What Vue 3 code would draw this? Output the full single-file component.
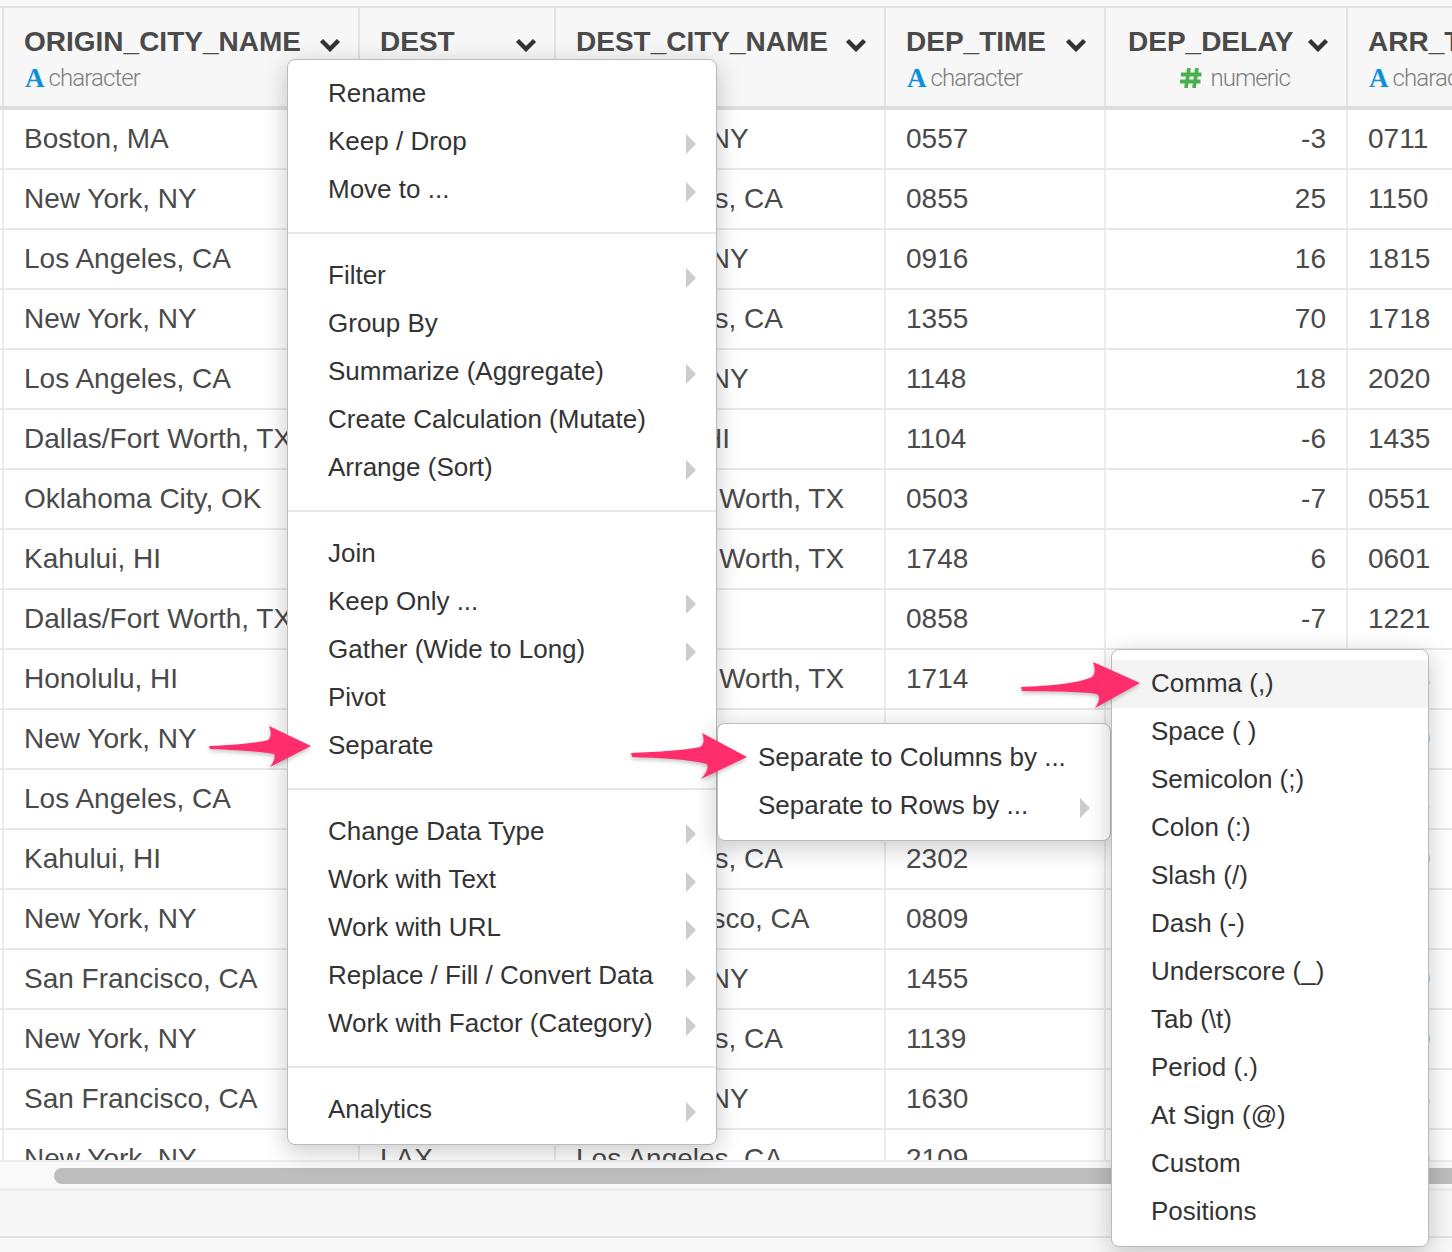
<script setup>
const columns = [
  { name: 'ORIGIN_CITY_NAME', cls: 'c-origin', type: 'character' },
  { name: 'DEST', cls: 'c-dest', type: 'character' },
  { name: 'DEST_CITY_NAME', cls: 'c-city', type: 'character' },
  { name: 'DEP_TIME', cls: 'c-time', type: 'character' },
  { name: 'DEP_DELAY', cls: 'c-delay', type: 'numeric' },
  { name: 'ARR_TIME', cls: 'c-arr', type: 'character' }
];

const rows = [
  ['Boston, MA', 'JFK', 'New York, NY', '0557', '-3', '0711'],
  ['New York, NY', 'LAX', 'Los Angeles, CA', '0855', '25', '1150'],
  ['Los Angeles, CA', 'JFK', 'New York, NY', '0916', '16', '1815'],
  ['New York, NY', 'LAX', 'Los Angeles, CA', '1355', '70', '1718'],
  ['Los Angeles, CA', 'JFK', 'New York, NY', '1148', '18', '2020'],
  ['Dallas/Fort Worth, TX', 'HNL', 'Honolulu, HI', '1104', '-6', '1435'],
  ['Oklahoma City, OK', 'DFW', 'Dallas/Fort Worth, TX', '0503', '-7', '0551'],
  ['Kahului, HI', 'DFW', 'Dallas/Fort Worth, TX', '1748', '6', '0601'],
  ['Dallas/Fort Worth, TX', 'OGG', 'Kahului, HI', '0858', '-7', '1221'],
  ['Honolulu, HI', 'DFW', 'Dallas/Fort Worth, TX', '1714', '4', '0458'],
  ['New York, NY', 'LAX', 'Los Angeles, CA', '1200', '12', '1530'],
  ['Los Angeles, CA', 'JFK', 'New York, NY', '0735', '-2', '1602'],
  ['Kahului, HI', 'LAX', 'Los Angeles, CA', '2302', '2', '0640'],
  ['New York, NY', 'SFO', 'San Francisco, CA', '0809', '9', '1120'],
  ['San Francisco, CA', 'JFK', 'New York, NY', '1455', '-5', '2310'],
  ['New York, NY', 'LAX', 'Los Angeles, CA', '1139', '19', '1440'],
  ['San Francisco, CA', 'JFK', 'New York, NY', '1630', '30', '0055'],
  ['New York, NY', 'LAX', 'Los Angeles, CA', '2109', '14', '2359']
];

// groups of the column menu, a divider goes between each
const mainMenu = [
  [
    { label: 'Rename' },
    { label: 'Keep / Drop', sub: true },
    { label: 'Move to ...', sub: true }
  ],
  [
    { label: 'Filter', sub: true },
    { label: 'Group By' },
    { label: 'Summarize (Aggregate)', sub: true },
    { label: 'Create Calculation (Mutate)' },
    { label: 'Arrange (Sort)', sub: true }
  ],
  [
    { label: 'Join' },
    { label: 'Keep Only ...', sub: true },
    { label: 'Gather (Wide to Long)', sub: true },
    { label: 'Pivot' },
    { label: 'Separate' }
  ],
  [
    { label: 'Change Data Type', sub: true },
    { label: 'Work with Text', sub: true },
    { label: 'Work with URL', sub: true },
    { label: 'Replace / Fill / Convert Data', sub: true },
    { label: 'Work with Factor (Category)', sub: true }
  ],
  [{ label: 'Analytics', sub: true }]
];

const separators = [
  'Comma (,)', 'Space ( )', 'Semicolon (;)', 'Colon (:)', 'Slash (/)', 'Dash (-)',
  'Underscore (_)', 'Tab (\\t)', 'Period (.)', 'At Sign (@)', 'Custom', 'Positions'
];
</script>

<template>
  <div class="page">
    <div class="table-wrap">
      <div class="row head">
        <div v-for="col in columns" :key="col.name" class="cell" :class="col.cls">
          <div class="head-top">
            <span class="head-name">{{ col.name }}</span>
            <svg class="chevron" width="22" height="14" viewBox="0 0 22 14">
              <path d="M2.5 2.5 L11 11 L19.5 2.5" fill="none" stroke="#333" stroke-width="4.4" />
            </svg>
          </div>
          <div class="head-type" :class="{ numeric: col.type === 'numeric' }">
            <svg v-if="col.type === 'numeric'" class="type-hash" width="22" height="20" viewBox="0 0 22 20">
              <path d="M9 0 L6 20 M17 0 L14 20 M1 6.5 H21.5 M0 13.5 H20.5" fill="none" stroke="#4caf50" stroke-width="3.8" />
            </svg>
            <span v-else class="type-a">A</span>
            <span class="type-name">{{ col.type }}</span>
          </div>
        </div>
      </div>
      <div v-for="(row, i) in rows" :key="i" class="row body-row">
        <div
          v-for="(val, j) in row"
          :key="j"
          class="cell"
          :class="[columns[j].cls, { right: columns[j].type === 'numeric' }]"
        >{{ val }}</div>
      </div>
    </div>

    <div class="scroll-track"><div class="scroll-thumb"></div></div>
    <div class="footer"></div>
    <div class="footer-end"></div>

    <!-- column menu -->
    <div class="menu menu-main">
      <template v-for="(group, g) in mainMenu" :key="g">
        <div v-if="g > 0" class="divider"></div>
        <div v-for="item in group" :key="item.label" class="item">
          <span>{{ item.label }}</span>
          <i v-if="item.sub" class="caret"></i>
        </div>
      </template>
    </div>

    <div class="menu menu-sub">
      <div class="item">Separate to Columns by ...</div>
      <div class="item">
        <span>Separate to Rows by ...</span>
        <i class="caret"></i>
      </div>
    </div>

    <div class="menu menu-sep">
      <div v-for="(label, i) in separators" :key="label" class="item" :class="{ active: i === 0 }">{{ label }}</div>
    </div>

    <svg class="arrow arrow-1" width="106" height="44" viewBox="0 0 106 44">
      <path d="M1 21 C 25 20 50 18 60 15 C 64 12 63 6 61 1 L 103 21 L 62 42 C 66 36 68 32 66 29 C 50 26 25 25 2 24 Z" />
    </svg>
    <svg class="arrow arrow-2" width="120" height="48" viewBox="0 0 120 48">
      <path d="M1 21 C 28 20 58 18 70 15 C 75 12 74 6 72 1 L 117 25 L 71 47 C 76 41 79 36 77 32 C 58 27 28 26 2 25 Z" />
    </svg>
    <svg class="arrow arrow-3" width="122" height="48" viewBox="0 0 122 48">
      <path d="M1 26 C 30 25 60 22 72 16 C 76 12 75 6 73 1 L 120 22 L 75 47 C 79 41 81 36 77 33 C 60 30 26 31 2 30 Z" />
    </svg>
  </div>
</template>

<style scoped>
.page {
  position: relative;
  width: 1452px;
  height: 1252px;
  overflow: hidden;
  padding-top: 6px;
  box-sizing: border-box;
  background: #f8f8f8;
  font-family: "Liberation Sans", Arial, sans-serif;
  font-size: 28px;
  color: #4a4a4a;
}

.table-wrap {
  height: 1154px;
  overflow: hidden;
  background: #fff;
  border-top: 2px solid #e2e2e2;
  box-sizing: border-box;
}

.row {
  display: flex;
  padding-left: 2px;
}

.cell {
  flex: none;
  box-sizing: border-box;
  padding: 0 20px;
  border-left: 2px solid #ececec;
  white-space: nowrap;
  overflow: hidden;
}

.c-origin { width: 356px; }
.c-dest { width: 196px; }
.c-city { width: 330px; }
.c-time { width: 220px; }
.c-delay { width: 242px; }
.c-arr { width: 200px; }

.head {
  height: 102px;
  background: #f7f7f7;
  border-bottom: 4px solid #dedede;
  box-sizing: border-box;
}

.head .cell {
  border-left-color: #e2e2e2;
  padding-top: 18px;
  padding-right: 17px;
}

.head .c-delay {
  padding-left: 22px;
}

.head-top {
  display: flex;
  justify-content: space-between;
  align-items: center;
  height: 32px;
  font-weight: 700;
}

.chevron {
  margin-top: 6px;
  flex: none;
}

.head-type {
  display: flex;
  align-items: center;
  height: 28px;
  margin-top: 6px;
  font-size: 24px;
}

.head-type.numeric {
  justify-content: flex-end;
  padding-right: 39px;
}

.type-a {
  font-family: "Liberation Serif", serif;
  font-weight: 700;
  font-size: 27px;
  color: #0d8fdc;
  margin-left: 1px;
  margin-right: 4px;
}

.type-hash {
  flex: none;
  margin-right: 8px;
}

.type-name {
  font-family: Roboto, sans-serif;
  font-weight: 300;
  color: #7d7d7d;
  letter-spacing: -0.9px;
}

.body-row {
  height: 60px;
  border-bottom: 2px solid #e8e8e8;
  box-sizing: border-box;
}

.body-row .cell {
  line-height: 57px;
}

.right {
  text-align: right;
}

.scroll-track {
  height: 28px;
  padding-top: 6px;
  box-sizing: border-box;
  background: #f9f9f9;
  border-top: 2px solid #ededed;
}

.scroll-thumb {
  height: 16px;
  margin-left: 54px;
  border-radius: 8px 0 0 8px;
  background: #bdbdbd;
}

.footer {
  height: 50px;
  box-sizing: border-box;
  background: #f7f7f7;
  border-top: 3px solid #eeeeee;
  border-bottom: 2px solid #e2e2e2;
}

.footer-end {
  height: 14px;
}

.menu {
  position: absolute;
  box-sizing: border-box;
  background: #fff;
  border: 1px solid #bcbcbc;
  border-radius: 8px;
  box-shadow: 0 6px 24px rgba(0, 0, 0, 0.22);
  color: #333;
  font-size: 26px;
  overflow: hidden;
}

.menu-main {
  left: 287px;
  top: 59px;
  width: 430px;
  height: 1086px;
  padding-top: 9px;
}

.menu-sub {
  left: 717px;
  top: 723px;
  width: 394px;
  height: 118px;
  padding-top: 9px;
}

.menu-sep {
  left: 1111px;
  top: 649px;
  width: 318px;
  height: 598px;
  padding-top: 10px;
}

.item {
  position: relative;
  height: 48px;
  line-height: 48px;
  padding-left: 40px;
  white-space: nowrap;
}

.menu-sep .item {
  line-height: 47px;
  padding-left: 39px;
}

.active {
  background: #f4f4f4;
}

.caret {
  position: absolute;
  right: 20px;
  top: 17px;
  border-style: solid;
  border-width: 10px 0 10px 10px;
  border-color: transparent transparent transparent #cccccc;
}

.divider {
  height: 2px;
  margin: 19px 0 17px;
  background: #e8e8e8;
}

.arrow {
  position: absolute;
  fill: #ff2d6c;
  filter: drop-shadow(0 2px 2px rgba(0, 0, 0, 0.25));
}

.arrow-1 { left: 208px; top: 725px; }
.arrow-2 { left: 630px; top: 732px; }
.arrow-3 { left: 1020px; top: 661px; }
</style>

<style>
html, body {
  margin: 0;
  background: #f8f8f8;
  overflow: hidden;
}
</style>
